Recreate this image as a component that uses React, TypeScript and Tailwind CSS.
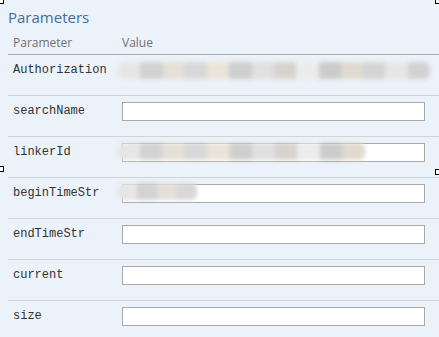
import React from "react";

const rows: { name: string; blur?: "full" | "long" | "short" }[] = [
  { name: "Authorization", blur: "full" },
  { name: "searchName" },
  { name: "linkerId", blur: "long" },
  { name: "beginTimeStr", blur: "short" },
  { name: "endTimeStr" },
  { name: "current" },
  { name: "size" },
];

// blurred (redacted) token blocks
const tokenColors = [
  "#e6e6e6", "#d2d2d2", "#e4e0d8", "#d8d8d8", "#eae4d8", "#cecece",
  "#e0e0e0", "#d6d3cd", "#ececec", "#cbcbcb", "#e0dad0", "#d4d4d4",
];

function Redacted({ width }: { width: number }) {
  const blocks = Math.max(3, Math.round(width / 22));
  return (
    <div
      className="flex h-[17px] items-stretch overflow-hidden rounded-[6px] blur-[2px]"
      style={{ width }}
    >
      {Array.from({ length: blocks }).map((_, i) => (
        <span
          key={i}
          className="flex-1"
          style={{ backgroundColor: tokenColors[i % tokenColors.length] }}
        />
      ))}
    </div>
  );
}

function Handle({ className }: { className: string }) {
  return <div className={`absolute h-[6px] w-[6px] border border-black bg-white ${className}`} />;
}

export default function App() {
  return (
    <div
      className="relative h-[337px] w-[439px] overflow-hidden bg-[#ecf2f9] pl-2"
      style={{ fontFamily: '"Open Sans", "Liberation Sans", sans-serif' }}
    >
      <h2 className="pt-[6px] text-[15px] leading-[22px] text-[#3b6ea5]">Parameters</h2>

      <div className="mt-[3px] flex h-[24px] items-center border-b border-[#a4a9ae] text-[12px] text-[#707070]">
        <div className="w-[114px] pl-[5px]">Parameter</div>
        <div>Value</div>
      </div>

      {rows.map((r) => (
        <div key={r.name} className="flex h-[41px] items-start border-b border-[#cfd4d9] pt-[5px]">
          <div
            className="w-[114px] pl-[5px] text-[12px] leading-[20px] text-[#333]"
            style={{ fontFamily: '"Liberation Mono", "DejaVu Sans Mono", monospace' }}
          >
            {r.name}
          </div>
          <div className="relative flex h-[20px] w-[303px] items-center">
            {r.blur === "full" ? (
              <div className="-ml-[4px] flex h-[22px] items-center">
                <Redacted width={312} />
              </div>
            ) : (
              <>
                <input
                  className="h-[19px] w-full border border-[#a9a9a9] bg-white px-1 text-[12px] outline-none"
                  type="text"
                />
                {r.blur === "long" && (
                  <div className="absolute -left-[5px] top-[1px]">
                    <Redacted width={248} />
                  </div>
                )}
                {r.blur === "short" && (
                  <div className="absolute -left-[5px] top-[0px]">
                    <Redacted width={80} />
                  </div>
                )}
              </>
            )}
          </div>
        </div>
      ))}

      <Handle className="left-[-2px] top-[-2px]" />
      <Handle className="right-[-2px] top-[-2px]" />
      <Handle className="left-[-2px] top-[166px]" />
      <Handle className="right-[-2px] top-[169px]" />
    </div>
  );
}
